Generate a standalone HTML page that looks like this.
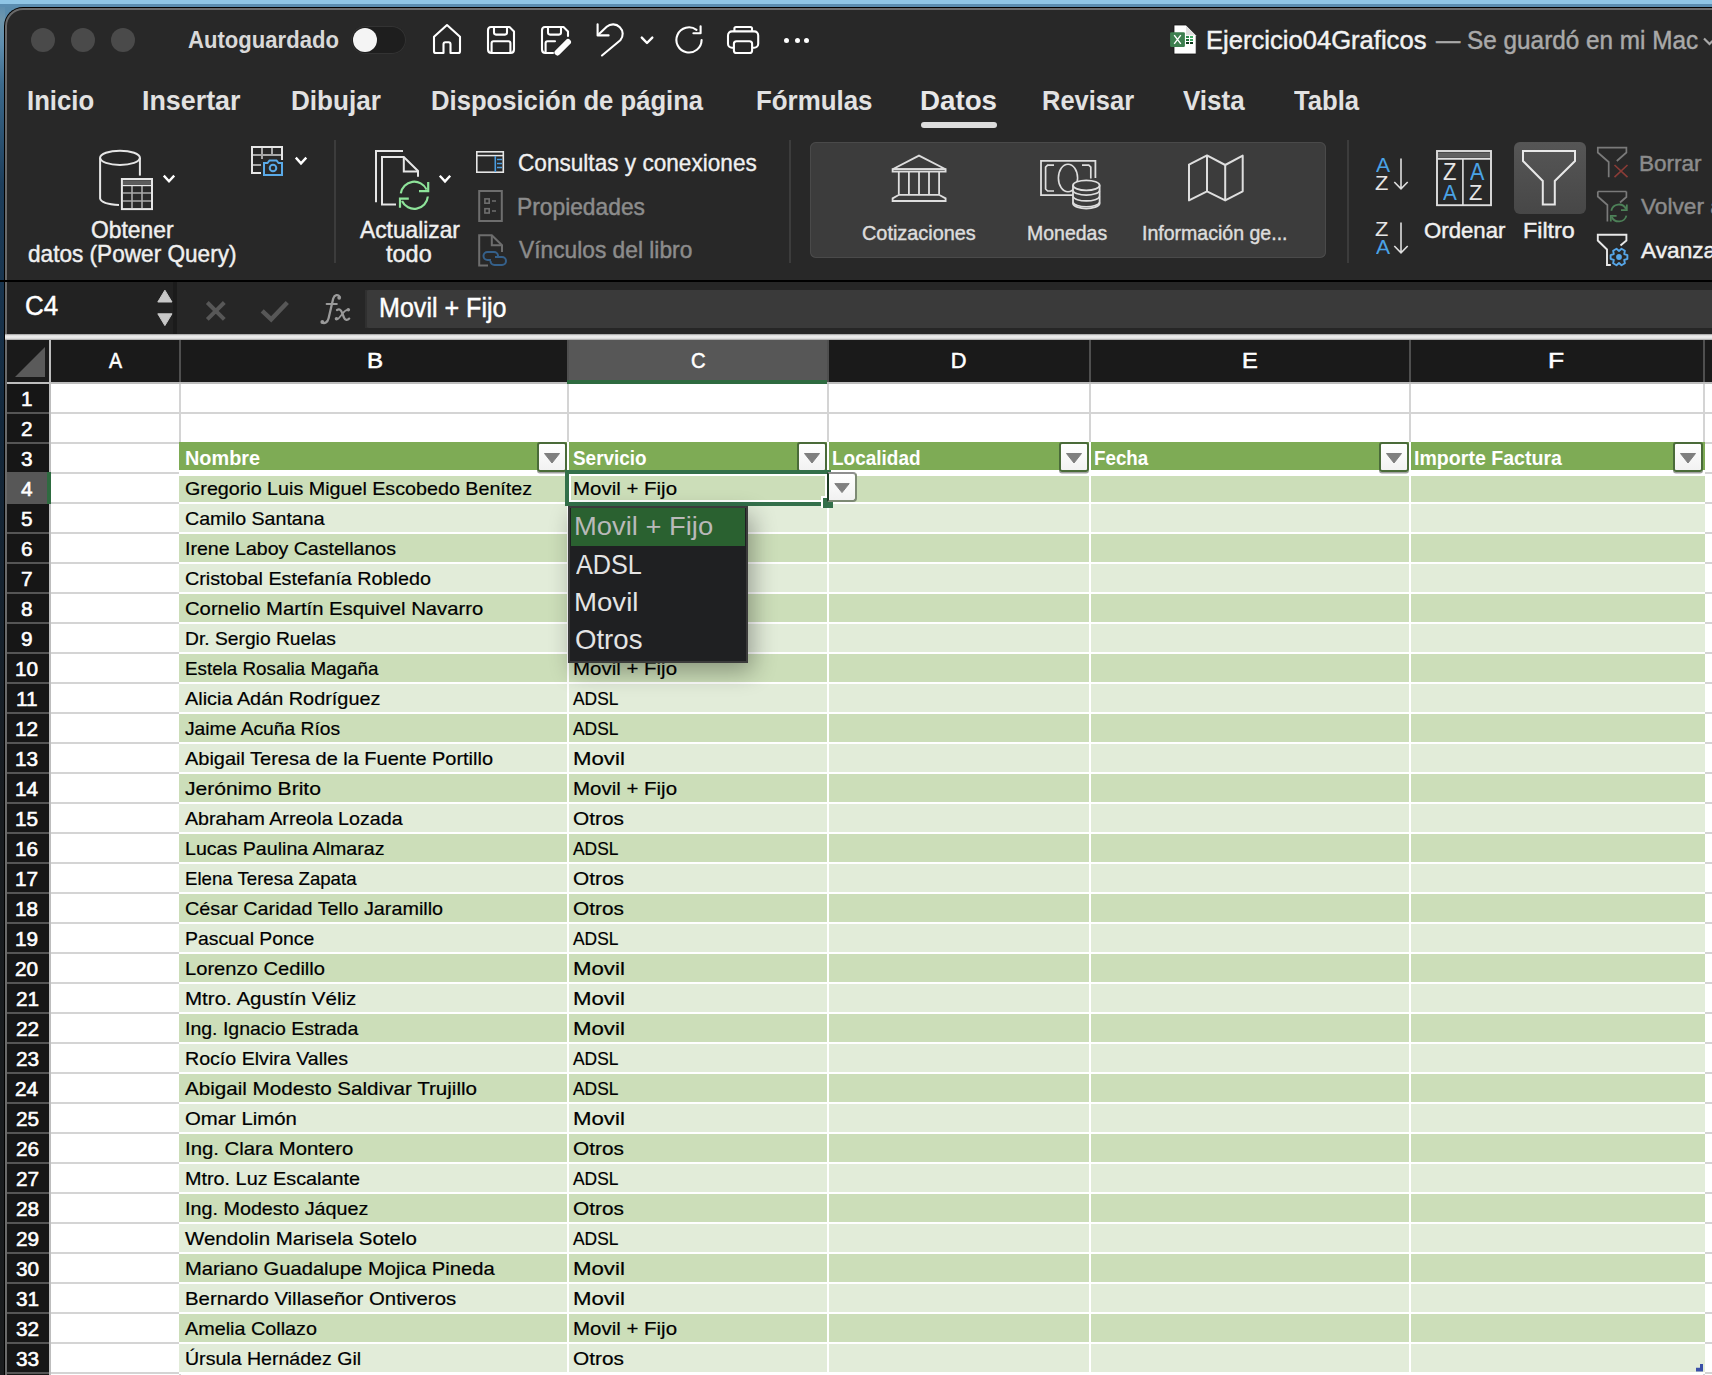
<!DOCTYPE html>
<html><head><meta charset="utf-8"><style>
html,body{margin:0;padding:0;}
body{width:1712px;height:1375px;overflow:hidden;position:relative;background:#0f2a44;font-family:"Liberation Sans", sans-serif;}
.t{position:absolute;line-height:0;white-space:nowrap;transform-origin:0 0;}
.r{position:absolute;}
svg{position:absolute;overflow:visible;}
</style></head><body>

<div class="r" style="left:0px;top:0px;width:60px;height:60px;background:#5a8cad;"></div>
<div class="r" style="left:0px;top:4px;width:5px;height:1371px;background:#0f2840;background:linear-gradient(#5b8db0 0px,#6f97ad 16px,#5f8eae 40px,#3c6a8c 80px,#1d3e5c 180px,#13283c 420px,#181c20 800px,#1a1c1e 1375px);"></div>
<div class="r" style="left:0px;top:4px;width:1712px;height:3px;background:#5b8db0;"></div>
<div class="r" style="left:0px;top:0px;width:1712px;height:4px;background:#8fc5e5;"></div>
<div class="r" style="left:4px;top:7px;width:1720px;height:1400px;background:#000;border-top-left-radius:19px;"></div>
<div class="r" style="left:5px;top:8px;width:1720px;height:1400px;background:#6a6a6a;border-top-left-radius:18px;"></div>
<div class="r" style="left:7px;top:10px;width:1720px;height:1400px;background:#282828;border-top-left-radius:16px;"></div>
<div class="r" style="left:31px;top:28px;width:24px;height:24px;background:#4a4a4a;border-radius:50%;"></div>
<div class="r" style="left:71px;top:28px;width:24px;height:24px;background:#4a4a4a;border-radius:50%;"></div>
<div class="r" style="left:111px;top:28px;width:24px;height:24px;background:#4a4a4a;border-radius:50%;"></div>
<div class="t" style="left:187.55px;top:39.94px;font-size:24.71px;color:#d9d9d9;font-weight:bold;transform:scaleX(0.8942);">Autoguardado</div>
<div class="r" style="left:351px;top:26px;width:55px;height:28px;background:#1e1e1e;border-radius:14px;box-shadow:inset 0 0 0 1px #333;"></div>
<div class="r" style="left:353px;top:28px;width:24px;height:24px;background:#f4f4f4;border-radius:50%;"></div>
<div class="t" style="left:1206.36px;top:39.79px;font-size:25.15px;color:#f2f2f2;transform:scaleX(1.0179);-webkit-text-stroke:0.45px #f2f2f2;">Ejercicio04Graficos</div>
<div class="t" style="left:1435.70px;top:39.79px;font-size:25.15px;color:#a9a9a9;transform:scaleX(0.9671);-webkit-text-stroke:0.45px #a9a9a9;">— Se guardó en mi Mac</div>
<div class="t" style="left:27.35px;top:100.53px;font-size:27.33px;color:#e2e2e2;font-weight:bold;transform:scaleX(0.9401);">Inicio</div>
<div class="t" style="left:142.28px;top:100.53px;font-size:27.33px;color:#e2e2e2;font-weight:bold;transform:scaleX(0.9821);">Insertar</div>
<div class="t" style="left:290.83px;top:100.53px;font-size:27.33px;color:#e2e2e2;font-weight:bold;transform:scaleX(0.9537);">Dibujar</div>
<div class="t" style="left:430.86px;top:100.53px;font-size:27.33px;color:#e2e2e2;font-weight:bold;transform:scaleX(0.9383);">Disposición de página</div>
<div class="t" style="left:756.34px;top:100.53px;font-size:27.33px;color:#e2e2e2;font-weight:bold;transform:scaleX(0.9470);">Fórmulas</div>
<div class="t" style="left:920.42px;top:100.53px;font-size:27.33px;color:#e8e8e8;font-weight:bold;transform:scaleX(1.0144);">Datos</div>
<div class="t" style="left:1041.87px;top:100.53px;font-size:27.33px;color:#e2e2e2;font-weight:bold;transform:scaleX(0.9326);">Revisar</div>
<div class="t" style="left:1183.26px;top:100.53px;font-size:27.33px;color:#e2e2e2;font-weight:bold;transform:scaleX(0.9498);">Vista</div>
<div class="t" style="left:1294.27px;top:100.53px;font-size:27.33px;color:#e2e2e2;font-weight:bold;transform:scaleX(0.9386);">Tabla</div>
<div class="r" style="left:921px;top:121.5px;width:76px;height:6px;background:#dcdcdc;border-radius:3px;"></div>
<svg style="left:0;top:0" width="1712" height="80"><path d="M1704 38.5 L1709.5 44 L1715 38.5" fill="none" stroke="#a9a9a9" stroke-width="2.2"/></svg>
<svg style="left:0;top:0" width="1712" height="280" fill="none" stroke="#ffffff" stroke-width="2.1" stroke-linecap="round" stroke-linejoin="round"><path d="M443.5 53 H435.8 Q434 53 434 51.2 V36.8 L447 25 L460 36.8 V51.2 Q460 53 458.2 53 H450.5 V44.2 Q450.5 42.3 448.6 42.3 H445.4 Q443.5 42.3 443.5 44.2 Z"/><path d="M491 27 H509.5 L514 31.5 V49.5 Q514 53 510.5 53 H491.5 Q488 53 488 49.5 V30.5 Q488 27 491 27 Z"/><path d="M494 27.2 V32.6 Q494 34.6 496 34.6 H505 Q507 34.6 507 32.6 V27.2"/><path d="M491.6 52.8 V43.2 Q491.6 41.3 493.5 41.3 H508.5 Q510.4 41.3 510.4 43.2 V52.8"/><path d="M553 53 H545.5 Q542 53 542 49.5 V30.5 Q542 27 545 27 H563.5 L568 31.5 V36"/><path d="M548 27.2 V32.6 Q548 34.6 550 34.6 H559 Q561 34.6 561 32.6 V27.2"/><path d="M545.6 52.8 V43.2 Q545.6 41.3 547.5 41.3 H555"/><path d="M557.5 52.5 L568 42" stroke-width="6"/><path d="M597.6 24.3 V35.4 H608.6"/><path d="M598 35 L606.7 26.8 A9.6 9.6 0 0 1 620.3 40.3 L602 55.5"/><path d="M641.8 37.6 L647 43 L652.3 37.6" stroke-width="2.4"/><path d="M701.6 40 A12.6 12.6 0 1 1 696.5 29.8"/><path d="M700.6 26.3 V33.3 H693.4"/><rect x="728" y="31.4" width="30.2" height="16.4" rx="4"/><path d="M734.4 31 V28.6 Q734.4 27 736 27 H750.4 Q752 27 752 28.6 V31"/><rect x="733.9" y="41.2" width="18.2" height="11.8" rx="2.6" fill="#282828"/></svg>
<div class="r" style="left:784.4px;top:37.5px;width:5px;height:5px;background:#ffffff;border-radius:50%;"></div>
<div class="r" style="left:794.5px;top:37.5px;width:5px;height:5px;background:#ffffff;border-radius:50%;"></div>
<div class="r" style="left:804.4px;top:37.5px;width:5px;height:5px;background:#ffffff;border-radius:50%;"></div>
<svg style="left:0;top:0" width="1712" height="80"><path d="M1174 25 H1186 L1196.2 35.2 V54 H1174 Z" fill="#ffffff" stroke="#111" stroke-width="0.8"/><path d="M1186 25.5 V35.2 H1195.8 Z" fill="#e0e0e0"/><rect x="1170.1" y="32.2" width="14.8" height="14.7" rx="1.2" fill="#3d7f4f"/><path d="M1174.2 35.2 L1180.8 43.9 M1180.8 35.2 L1174.2 43.9" stroke="#fff" stroke-width="1.4"/><rect x="1186" y="36" width="3" height="2" fill="#2f8a4f"/><rect x="1190" y="36" width="3" height="2" fill="#44b06a"/><rect x="1186" y="39" width="3" height="2" fill="#1f6f38"/><rect x="1190" y="39" width="3" height="2" fill="#3ea563"/><rect x="1186" y="42" width="3" height="2" fill="#0f3d1e"/><rect x="1190" y="42" width="3" height="2" fill="#0c3519"/></svg>
<div class="r" style="left:333.5px;top:140px;width:2px;height:123px;background:#3c3c3c;"></div>
<div class="r" style="left:789px;top:140px;width:2px;height:123px;background:#3c3c3c;"></div>
<div class="r" style="left:1347px;top:140px;width:2px;height:123px;background:#3c3c3c;"></div>
<div class="r" style="left:810px;top:142px;width:516px;height:116px;background:#3c3c3c;border-radius:6px;box-shadow:inset 0 0 0 1px #4a4a4a;"></div>
<div class="r" style="left:1514px;top:142px;width:72px;height:72px;background:#4b4b4b;border-radius:6px;background:linear-gradient(#565656,#474747);"></div>
<svg style="left:0;top:0" width="1712" height="280" fill="none" stroke="#e6e6e6" stroke-width="2" stroke-linecap="butt" stroke-linejoin="miter"><ellipse cx="120" cy="157.8" rx="19.9" ry="7.1"/><path d="M100.1 157.8 V198.4 Q101.5 204 119 205"/><path d="M139.9 157.8 V175.6"/><rect x="121.9" y="179" width="30.1" height="30.1" fill="#282828"/><rect x="123" y="180.3" width="28" height="4" fill="#5c5c5c" stroke="none"/><path d="M132 185 V208 M142 185 V208 M123 193 H151 M123 201 H151" stroke="#a8a8a8" stroke-width="1.6"/><path d="M122 185.5 H152" stroke="#e6e6e6" stroke-width="1.4"/><path d="M163.8 175.6 L169 181.2 L174.2 175.6" stroke="#fff" stroke-width="2.4"/><path d="M295.8 157.6 L301 163.4 L306.3 157.6" stroke="#fff" stroke-width="2.4"/><path d="M439.8 175.8 L445 181.4 L450.2 175.8" stroke="#fff" stroke-width="2.4"/><path d="M261 173 H252 V147 H282 V160"/><path d="M262 148 V159 M272 148 V156 M253 155 H281 M253 165 H261" stroke="#a8a8a8" stroke-width="2"/><path d="M264 175 V163 H267.5 L269.5 160.5 H276.5 L278.5 163 H282 V175 Z" stroke="#5aaae8" fill="#282828"/><circle cx="273" cy="168" r="3.3" stroke="#5aaae8"/><path d="M376 202.2 V151 H403"/><path d="M396 204.5 H382 V157 H403.8 L418 171 V176.8"/><path d="M403.8 157 V171.5 H418"/><path d="M400.8 193.4 A13.6 13.6 0 0 1 426.6 189.6" stroke="#8ee39a" stroke-width="2.2"/><path d="M428.2 182 V191.2 H419" stroke="#8ee39a" stroke-width="2.2"/><path d="M427.85 196.5 A13.6 13.6 0 0 1 402 201.05" stroke="#8ee39a" stroke-width="2.2"/><path d="M400 207.8 V198.7 H408.8" stroke="#8ee39a" stroke-width="2.2"/><rect x="476.8" y="151.8" width="26.5" height="20.4" stroke-width="1.6"/><path d="M477 155.6 H503" stroke-width="1.5"/><path d="M495.3 156 V172" stroke="#4a9de0" stroke-width="1.6"/><path d="M497 159.4 H502 M497 163.5 H502 M497 167.5 H502" stroke="#4a9de0" stroke-width="1.5"/><rect x="479.2" y="191" width="22.6" height="30" stroke="#6e6e6e" stroke-width="2"/><rect x="484.9" y="198.9" width="4.3" height="4.3" stroke="#6e6e6e" stroke-width="1.6"/><rect x="484.9" y="208.7" width="4.3" height="4.3" stroke="#6e6e6e" stroke-width="1.6"/><path d="M492 201 H496 M492 211 H496" stroke="#6e6e6e" stroke-width="1.6"/><path d="M488 265.5 H479.2 V235.2 H491.8 L502 245.2 V252" stroke="#6e6e6e" stroke-width="2"/><path d="M491.8 235.5 V245.2 H502" stroke="#6e6e6e" stroke-width="2"/><path d="M491 260 H487.5 A4 4 0 0 1 487.5 252 H494 A4 4 0 0 1 498 256" stroke="#35608a" stroke-width="2"/><path d="M495 257 H502 A4 4 0 0 1 502 265 H494.5 A4 4 0 0 1 490.5 261" stroke="#35608a" stroke-width="2"/></svg>
<svg style="left:0;top:0" width="1712" height="280" fill="none" stroke="#dedede" stroke-width="1.8"><path d="M892.6 169.2 L919 155.6 L945.6 169.2 Z"/><rect x="892.6" y="169.2" width="53" height="2.4"/><path d="M898.8 172 V194.6 M908.9 172 V194.6 M919 172 V194.6 M929 172 V194.6 M939.1 172 V194.6"/><path d="M899 194.8 H939 L945.6 198.4 V201 H892.6 V198.4 Z"/><path d="M1075 195.2 H1041 V160.8 H1095.4 V178"/><path d="M1054 165.2 H1047.6 L1045.6 167.2 V189 L1047.6 191 H1054 M1082 165.2 H1088.8 L1090.8 167.2 V178.6" stroke-width="1.7"/><ellipse cx="1068" cy="178" rx="9.6" ry="13.8" stroke-width="1.6"/><path d="M1073 185.3 V203.8 A13.4 5.4 0 0 0 1099.6 203.8 V185.3" fill="#3c3c3c"/><ellipse cx="1086.3" cy="185.3" rx="13.3" ry="5" fill="#3c3c3c"/><path d="M1073 190.7 A13.4 5 0 0 0 1099.6 190.7 M1073 196.5 A13.4 5 0 0 0 1099.6 196.5 M1073 202.3 A13.4 5 0 0 0 1099.6 202.3" stroke-width="1.6"/><path d="M1189 164.6 L1207 155.4 L1225.2 165 L1242.7 155.6 V191.3 L1225.2 200.4 L1207 191.3 L1189 200.4 Z M1207 155.4 V191.3 M1225.2 165 V200.4" stroke-width="2" stroke-linejoin="round"/></svg>
<svg style="left:0;top:0" width="1712" height="280" fill="none" stroke="#dedede" stroke-width="1.6"><path d="M1401 158.5 V188.5 M1394.3 182 L1401 188.8 L1407.7 182"/><path d="M1401 222.5 V252.5 M1394.3 246 L1401 252.8 L1407.7 246"/><rect x="1437" y="151" width="54" height="54.2" stroke-width="1.9"/><rect x="1438" y="152.4" width="52" height="5.4" fill="#616161" stroke="none"/><path d="M1437.5 158.9 H1490.5 M1462.9 159 V205"/></svg>
<div class="t" style="left:1376.00px;top:164.80px;font-size:19.62px;color:#4aa3e6;transform:scaleX(1.0769);">A</div>
<div class="t" style="left:1375.46px;top:182.95px;font-size:20.35px;color:#e6e6e6;transform:scaleX(1.0756);">Z</div>
<div class="t" style="left:1375.46px;top:229.15px;font-size:20.35px;color:#e6e6e6;transform:scaleX(1.0756);">Z</div>
<div class="t" style="left:1376.00px;top:247.05px;font-size:20.35px;color:#4aa3e6;transform:scaleX(1.0370);">A</div>
<div class="t" style="left:1443.31px;top:171.99px;font-size:23.98px;color:#e6e6e6;transform:scaleX(0.9208);">Z</div>
<div class="t" style="left:1442.60px;top:192.09px;font-size:22.82px;color:#4aa3e6;transform:scaleX(0.9049);">A</div>
<div class="t" style="left:1469.70px;top:171.99px;font-size:23.98px;color:#4aa3e6;transform:scaleX(0.9000);">A</div>
<div class="t" style="left:1469.28px;top:192.09px;font-size:22.82px;color:#e6e6e6;transform:scaleX(0.9600);">Z</div>
<svg style="left:0;top:0" width="1712" height="280" fill="none" stroke="#e8e8e8" stroke-width="2"><path d="M1523 151 H1575 V161 L1554.8 181 V204.6 H1542.8 V181 L1523 161 Z"/><path d="M1616.8 161 L1626.4 152.5 V147.6 H1597.8 V152.5 L1608.7 162 V177.2" stroke="#7a7a7a" stroke-width="1.7"/><path d="M1614.5 165 L1627.5 177.2 M1627.5 165 L1614.5 177.2" stroke="#8a3c37" stroke-width="1.6"/><path d="M1597.8 191.5 V196.5 L1607.4 205 V221.5 M1626.4 191.5 V197 L1620 202.5 M1597.8 191.5 H1626.4" stroke="#7a7a7a" stroke-width="1.7"/><path d="M1611.3 210.8 A7.8 7.8 0 0 1 1626 209" stroke="#4d8158" stroke-width="1.8"/><path d="M1626.8 204.5 V210.2 H1621" stroke="#4d8158" stroke-width="1.8"/><path d="M1626.4 215.6 A7.8 7.8 0 0 1 1611.8 217" stroke="#4d8158" stroke-width="1.8"/><path d="M1610.8 221.6 V215.8 H1616.6" stroke="#4d8158" stroke-width="1.8"/><path d="M1610.8 265 H1607 V249.5 L1597.8 240.5 V234.8 H1626.4 V240.5 L1620.5 245.5" stroke="#e8e8e8" stroke-width="1.9"/></svg>
<svg style="left:0;top:0" width="1712" height="280"><polygon points="1627.38,255.07 1627.38,258.93 1624.20,260.00 1624.87,263.29 1621.51,265.22 1619.00,263.00 1616.49,265.22 1613.13,263.29 1613.80,260.00 1610.62,258.93 1610.62,255.07 1613.80,254.00 1613.13,250.71 1616.49,248.78 1619.00,251.00 1621.51,248.78 1624.87,250.71 1624.20,254.00" fill="none" stroke="#56a6e8" stroke-width="1.9" stroke-linejoin="round"/><circle cx="1619" cy="257" r="2.9" fill="#56a6e8"/></svg>
<div class="t" style="left:91.04px;top:230.14px;font-size:23.84px;color:#f0f0f0;transform:scaleX(0.9586);-webkit-text-stroke:0.45px #f0f0f0;">Obtener</div>
<div class="t" style="left:28.05px;top:253.94px;font-size:23.84px;color:#f0f0f0;transform:scaleX(0.9486);-webkit-text-stroke:0.45px #f0f0f0;">datos (Power Query)</div>
<div class="t" style="left:359.80px;top:230.14px;font-size:23.84px;color:#f0f0f0;transform:scaleX(0.9552);-webkit-text-stroke:0.45px #f0f0f0;">Actualizar</div>
<div class="t" style="left:386.15px;top:253.94px;font-size:23.84px;color:#f0f0f0;transform:scaleX(0.9867);-webkit-text-stroke:0.45px #f0f0f0;">todo</div>
<div class="t" style="left:517.51px;top:162.84px;font-size:23.84px;color:#f0f0f0;transform:scaleX(0.9487);-webkit-text-stroke:0.35px #f0f0f0;">Consultas y conexiones</div>
<div class="t" style="left:516.79px;top:206.74px;font-size:23.84px;color:#8c8c8c;transform:scaleX(0.9563);-webkit-text-stroke:0.45px #8c8c8c;">Propiedades</div>
<div class="t" style="left:518.70px;top:250.24px;font-size:23.84px;color:#8c8c8c;transform:scaleX(0.9550);-webkit-text-stroke:0.45px #8c8c8c;">Vínculos del libro</div>
<div class="t" style="left:861.72px;top:233.45px;font-size:20.35px;color:#dcdcdc;transform:scaleX(0.9768);-webkit-text-stroke:0.45px #dcdcdc;">Cotizaciones</div>
<div class="t" style="left:1027.36px;top:233.45px;font-size:20.35px;color:#dcdcdc;transform:scaleX(0.9575);-webkit-text-stroke:0.45px #dcdcdc;">Monedas</div>
<div class="t" style="left:1141.92px;top:233.45px;font-size:20.35px;color:#dcdcdc;transform:scaleX(0.9603);-webkit-text-stroke:0.45px #dcdcdc;">Información ge...</div>
<div class="t" style="left:1423.83px;top:230.04px;font-size:22.97px;color:#f0f0f0;transform:scaleX(0.9663);-webkit-text-stroke:0.45px #f0f0f0;">Ordenar</div>
<div class="t" style="left:1523.22px;top:229.64px;font-size:22.97px;color:#f0f0f0;transform:scaleX(1.0144);-webkit-text-stroke:0.45px #f0f0f0;">Filtro</div>
<div class="t" style="left:1639.26px;top:162.64px;font-size:22.67px;color:#8c8c8c;transform:scaleX(0.9943);-webkit-text-stroke:0.45px #8c8c8c;">Borrar</div>
<div class="t" style="left:1641.00px;top:206.14px;font-size:22.67px;color:#8c8c8c;-webkit-text-stroke:0.45px #8c8c8c;">Volver a</div>
<div class="t" style="left:1641.00px;top:250.14px;font-size:22.67px;color:#f0f0f0;-webkit-text-stroke:0.45px #f0f0f0;">Avanzadas</div>
<div class="r" style="left:0px;top:280px;width:1712px;height:2px;background:#000;"></div>
<div class="r" style="left:7px;top:282px;width:1710px;height:52px;background:#262626;"></div>
<div class="r" style="left:7px;top:282px;width:166px;height:52px;background:#222222;"></div>
<div class="r" style="left:173px;top:282px;width:4px;height:52px;background:#1b1b1b;"></div>
<div class="r" style="left:365px;top:290px;width:1350px;height:38px;background:#3a3a3a;border-radius:4px 0 0 4px;"></div>
<div class="r" style="left:365px;top:290px;width:2px;height:38px;background:#303030;"></div>
<div class="t" style="left:24.83px;top:306.43px;font-size:27.62px;color:#ffffff;transform:scaleX(0.9394);-webkit-text-stroke:0.45px #ffffff;">C4</div>
<div class="t" style="left:378.96px;top:308.43px;font-size:27.62px;color:#ffffff;transform:scaleX(0.9084);-webkit-text-stroke:0.45px #ffffff;">Movil + Fijo</div>
<div class="r" style="left:5px;top:334px;width:1712px;height:6px;background:#e6e6e6;background:linear-gradient(#9a9a9a,#ececec 30%,#e8e8e8 70%,#a0a0a0);"></div>
<div class="r" style="left:7px;top:340px;width:1710px;height:42px;background:#1a1a1a;"></div>
<div class="r" style="left:567px;top:340px;width:260px;height:40px;background:#575757;"></div>
<div class="r" style="left:179px;top:340px;width:2px;height:42px;background:#4f4f4f;"></div>
<div class="r" style="left:567px;top:340px;width:2px;height:42px;background:#4f4f4f;"></div>
<div class="r" style="left:827px;top:340px;width:2px;height:42px;background:#4f4f4f;"></div>
<div class="r" style="left:1089px;top:340px;width:2px;height:42px;background:#4f4f4f;"></div>
<div class="r" style="left:1409px;top:340px;width:2px;height:42px;background:#4f4f4f;"></div>
<div class="r" style="left:1703px;top:340px;width:2px;height:42px;background:#4f4f4f;"></div>
<div class="r" style="left:49px;top:340px;width:2px;height:1040px;background:#bdbdbd;"></div>
<div class="r" style="left:7px;top:382px;width:1710px;height:2px;background:#bdbdbd;"></div>
<div class="r" style="left:567px;top:380px;width:260px;height:4px;background:#2e6b40;"></div>
<svg style="left:0;top:0" width="1712" height="1375"><polygon points="15,377 45,347 45,377" fill="#5a5a5a"/></svg>
<div class="t" style="left:108.50px;top:360.75px;font-size:21.80px;color:#ffffff;transform:scaleX(0.8966);-webkit-text-stroke:0.55px #ffffff;">A</div>
<div class="t" style="left:366.56px;top:360.75px;font-size:21.80px;color:#ffffff;transform:scaleX(1.1064);-webkit-text-stroke:0.55px #ffffff;">B</div>
<div class="t" style="left:690.57px;top:360.75px;font-size:21.80px;color:#ffffff;transform:scaleX(0.9286);-webkit-text-stroke:0.55px #ffffff;">C</div>
<div class="t" style="left:950.75px;top:360.75px;font-size:21.80px;color:#ffffff;-webkit-text-stroke:0.55px #ffffff;">D</div>
<div class="t" style="left:1241.60px;top:360.75px;font-size:21.80px;color:#ffffff;transform:scaleX(1.0833);-webkit-text-stroke:0.55px #ffffff;">E</div>
<div class="t" style="left:1548.38px;top:360.75px;font-size:21.80px;color:#ffffff;transform:scaleX(1.2093);-webkit-text-stroke:0.55px #ffffff;">F</div>
<div class="r" style="left:51px;top:384px;width:1670px;height:1000px;background:#ffffff;"></div>
<div class="r" style="left:51px;top:412px;width:1670px;height:2px;background:#d4d4d4;"></div>
<div class="r" style="left:51px;top:442px;width:1670px;height:2px;background:#d4d4d4;"></div>
<div class="r" style="left:51px;top:472px;width:1670px;height:2px;background:#d4d4d4;"></div>
<div class="r" style="left:51px;top:502px;width:1670px;height:2px;background:#d4d4d4;"></div>
<div class="r" style="left:51px;top:532px;width:1670px;height:2px;background:#d4d4d4;"></div>
<div class="r" style="left:51px;top:562px;width:1670px;height:2px;background:#d4d4d4;"></div>
<div class="r" style="left:51px;top:592px;width:1670px;height:2px;background:#d4d4d4;"></div>
<div class="r" style="left:51px;top:622px;width:1670px;height:2px;background:#d4d4d4;"></div>
<div class="r" style="left:51px;top:652px;width:1670px;height:2px;background:#d4d4d4;"></div>
<div class="r" style="left:51px;top:682px;width:1670px;height:2px;background:#d4d4d4;"></div>
<div class="r" style="left:51px;top:712px;width:1670px;height:2px;background:#d4d4d4;"></div>
<div class="r" style="left:51px;top:742px;width:1670px;height:2px;background:#d4d4d4;"></div>
<div class="r" style="left:51px;top:772px;width:1670px;height:2px;background:#d4d4d4;"></div>
<div class="r" style="left:51px;top:802px;width:1670px;height:2px;background:#d4d4d4;"></div>
<div class="r" style="left:51px;top:832px;width:1670px;height:2px;background:#d4d4d4;"></div>
<div class="r" style="left:51px;top:862px;width:1670px;height:2px;background:#d4d4d4;"></div>
<div class="r" style="left:51px;top:892px;width:1670px;height:2px;background:#d4d4d4;"></div>
<div class="r" style="left:51px;top:922px;width:1670px;height:2px;background:#d4d4d4;"></div>
<div class="r" style="left:51px;top:952px;width:1670px;height:2px;background:#d4d4d4;"></div>
<div class="r" style="left:51px;top:982px;width:1670px;height:2px;background:#d4d4d4;"></div>
<div class="r" style="left:51px;top:1012px;width:1670px;height:2px;background:#d4d4d4;"></div>
<div class="r" style="left:51px;top:1042px;width:1670px;height:2px;background:#d4d4d4;"></div>
<div class="r" style="left:51px;top:1072px;width:1670px;height:2px;background:#d4d4d4;"></div>
<div class="r" style="left:51px;top:1102px;width:1670px;height:2px;background:#d4d4d4;"></div>
<div class="r" style="left:51px;top:1132px;width:1670px;height:2px;background:#d4d4d4;"></div>
<div class="r" style="left:51px;top:1162px;width:1670px;height:2px;background:#d4d4d4;"></div>
<div class="r" style="left:51px;top:1192px;width:1670px;height:2px;background:#d4d4d4;"></div>
<div class="r" style="left:51px;top:1222px;width:1670px;height:2px;background:#d4d4d4;"></div>
<div class="r" style="left:51px;top:1252px;width:1670px;height:2px;background:#d4d4d4;"></div>
<div class="r" style="left:51px;top:1282px;width:1670px;height:2px;background:#d4d4d4;"></div>
<div class="r" style="left:51px;top:1312px;width:1670px;height:2px;background:#d4d4d4;"></div>
<div class="r" style="left:51px;top:1342px;width:1670px;height:2px;background:#d4d4d4;"></div>
<div class="r" style="left:51px;top:1372px;width:1670px;height:2px;background:#d4d4d4;"></div>
<div class="r" style="left:179px;top:384px;width:2px;height:1000px;background:#d4d4d4;"></div>
<div class="r" style="left:567px;top:384px;width:2px;height:1000px;background:#d4d4d4;"></div>
<div class="r" style="left:827px;top:384px;width:2px;height:1000px;background:#d4d4d4;"></div>
<div class="r" style="left:1089px;top:384px;width:2px;height:1000px;background:#d4d4d4;"></div>
<div class="r" style="left:1409px;top:384px;width:2px;height:1000px;background:#d4d4d4;"></div>
<div class="r" style="left:1703px;top:384px;width:2px;height:1000px;background:#d4d4d4;"></div>
<div class="r" style="left:7px;top:384px;width:42px;height:1000px;background:#161616;"></div>
<div class="r" style="left:7px;top:412px;width:42px;height:2px;background:#555555;"></div>
<div class="r" style="left:7px;top:442px;width:42px;height:2px;background:#555555;"></div>
<div class="r" style="left:7px;top:472px;width:42px;height:2px;background:#555555;"></div>
<div class="r" style="left:7px;top:502px;width:42px;height:2px;background:#555555;"></div>
<div class="r" style="left:7px;top:532px;width:42px;height:2px;background:#555555;"></div>
<div class="r" style="left:7px;top:562px;width:42px;height:2px;background:#555555;"></div>
<div class="r" style="left:7px;top:592px;width:42px;height:2px;background:#555555;"></div>
<div class="r" style="left:7px;top:622px;width:42px;height:2px;background:#555555;"></div>
<div class="r" style="left:7px;top:652px;width:42px;height:2px;background:#555555;"></div>
<div class="r" style="left:7px;top:682px;width:42px;height:2px;background:#555555;"></div>
<div class="r" style="left:7px;top:712px;width:42px;height:2px;background:#555555;"></div>
<div class="r" style="left:7px;top:742px;width:42px;height:2px;background:#555555;"></div>
<div class="r" style="left:7px;top:772px;width:42px;height:2px;background:#555555;"></div>
<div class="r" style="left:7px;top:802px;width:42px;height:2px;background:#555555;"></div>
<div class="r" style="left:7px;top:832px;width:42px;height:2px;background:#555555;"></div>
<div class="r" style="left:7px;top:862px;width:42px;height:2px;background:#555555;"></div>
<div class="r" style="left:7px;top:892px;width:42px;height:2px;background:#555555;"></div>
<div class="r" style="left:7px;top:922px;width:42px;height:2px;background:#555555;"></div>
<div class="r" style="left:7px;top:952px;width:42px;height:2px;background:#555555;"></div>
<div class="r" style="left:7px;top:982px;width:42px;height:2px;background:#555555;"></div>
<div class="r" style="left:7px;top:1012px;width:42px;height:2px;background:#555555;"></div>
<div class="r" style="left:7px;top:1042px;width:42px;height:2px;background:#555555;"></div>
<div class="r" style="left:7px;top:1072px;width:42px;height:2px;background:#555555;"></div>
<div class="r" style="left:7px;top:1102px;width:42px;height:2px;background:#555555;"></div>
<div class="r" style="left:7px;top:1132px;width:42px;height:2px;background:#555555;"></div>
<div class="r" style="left:7px;top:1162px;width:42px;height:2px;background:#555555;"></div>
<div class="r" style="left:7px;top:1192px;width:42px;height:2px;background:#555555;"></div>
<div class="r" style="left:7px;top:1222px;width:42px;height:2px;background:#555555;"></div>
<div class="r" style="left:7px;top:1252px;width:42px;height:2px;background:#555555;"></div>
<div class="r" style="left:7px;top:1282px;width:42px;height:2px;background:#555555;"></div>
<div class="r" style="left:7px;top:1312px;width:42px;height:2px;background:#555555;"></div>
<div class="r" style="left:7px;top:1342px;width:42px;height:2px;background:#555555;"></div>
<div class="r" style="left:7px;top:1372px;width:42px;height:2px;background:#555555;"></div>
<div class="r" style="left:7px;top:472px;width:42px;height:32px;background:#575757;"></div>
<div class="r" style="left:47px;top:472px;width:4px;height:32px;background:#2e6b40;"></div>
<div class="t" style="left:21.09px;top:398.87px;font-size:20.00px;color:#ffffff;transform:scaleX(1.0400);-webkit-text-stroke:0.55px #ffffff;">1</div>
<div class="t" style="left:21.35px;top:428.87px;font-size:20.00px;color:#ffffff;transform:scaleX(1.0400);-webkit-text-stroke:0.55px #ffffff;">2</div>
<div class="t" style="left:21.48px;top:458.87px;font-size:20.00px;color:#ffffff;transform:scaleX(1.0400);-webkit-text-stroke:0.55px #ffffff;">3</div>
<div class="t" style="left:21.48px;top:488.87px;font-size:20.00px;color:#ffffff;transform:scaleX(1.0400);-webkit-text-stroke:0.55px #ffffff;">4</div>
<div class="t" style="left:21.48px;top:518.87px;font-size:20.00px;color:#ffffff;transform:scaleX(1.0400);-webkit-text-stroke:0.55px #ffffff;">5</div>
<div class="t" style="left:21.35px;top:548.87px;font-size:20.00px;color:#ffffff;transform:scaleX(1.0400);-webkit-text-stroke:0.55px #ffffff;">6</div>
<div class="t" style="left:21.35px;top:578.87px;font-size:20.00px;color:#ffffff;transform:scaleX(1.0400);-webkit-text-stroke:0.55px #ffffff;">7</div>
<div class="t" style="left:21.48px;top:608.87px;font-size:20.00px;color:#ffffff;transform:scaleX(1.0400);-webkit-text-stroke:0.55px #ffffff;">8</div>
<div class="t" style="left:21.48px;top:638.87px;font-size:20.00px;color:#ffffff;transform:scaleX(1.0400);-webkit-text-stroke:0.55px #ffffff;">9</div>
<div class="t" style="left:15.11px;top:668.87px;font-size:20.00px;color:#ffffff;transform:scaleX(1.0400);-webkit-text-stroke:0.55px #ffffff;">10</div>
<div class="t" style="left:16.02px;top:698.87px;font-size:20.00px;color:#ffffff;transform:scaleX(1.0400);-webkit-text-stroke:0.55px #ffffff;">11</div>
<div class="t" style="left:15.24px;top:728.87px;font-size:20.00px;color:#ffffff;transform:scaleX(1.0400);-webkit-text-stroke:0.55px #ffffff;">12</div>
<div class="t" style="left:15.24px;top:758.87px;font-size:20.00px;color:#ffffff;transform:scaleX(1.0400);-webkit-text-stroke:0.55px #ffffff;">13</div>
<div class="t" style="left:15.11px;top:788.87px;font-size:20.00px;color:#ffffff;transform:scaleX(1.0400);-webkit-text-stroke:0.55px #ffffff;">14</div>
<div class="t" style="left:15.24px;top:818.87px;font-size:20.00px;color:#ffffff;transform:scaleX(1.0400);-webkit-text-stroke:0.55px #ffffff;">15</div>
<div class="t" style="left:15.24px;top:848.87px;font-size:20.00px;color:#ffffff;transform:scaleX(1.0400);-webkit-text-stroke:0.55px #ffffff;">16</div>
<div class="t" style="left:15.24px;top:878.87px;font-size:20.00px;color:#ffffff;transform:scaleX(1.0400);-webkit-text-stroke:0.55px #ffffff;">17</div>
<div class="t" style="left:15.24px;top:908.87px;font-size:20.00px;color:#ffffff;transform:scaleX(1.0400);-webkit-text-stroke:0.55px #ffffff;">18</div>
<div class="t" style="left:15.24px;top:938.87px;font-size:20.00px;color:#ffffff;transform:scaleX(1.0400);-webkit-text-stroke:0.55px #ffffff;">19</div>
<div class="t" style="left:15.37px;top:968.87px;font-size:20.00px;color:#ffffff;transform:scaleX(1.0400);-webkit-text-stroke:0.55px #ffffff;">20</div>
<div class="t" style="left:15.50px;top:998.87px;font-size:20.00px;color:#ffffff;transform:scaleX(1.0400);-webkit-text-stroke:0.55px #ffffff;">21</div>
<div class="t" style="left:15.50px;top:1028.87px;font-size:20.00px;color:#ffffff;transform:scaleX(1.0400);-webkit-text-stroke:0.55px #ffffff;">22</div>
<div class="t" style="left:15.50px;top:1058.87px;font-size:20.00px;color:#ffffff;transform:scaleX(1.0400);-webkit-text-stroke:0.55px #ffffff;">23</div>
<div class="t" style="left:15.37px;top:1088.87px;font-size:20.00px;color:#ffffff;transform:scaleX(1.0400);-webkit-text-stroke:0.55px #ffffff;">24</div>
<div class="t" style="left:15.50px;top:1118.87px;font-size:20.00px;color:#ffffff;transform:scaleX(1.0400);-webkit-text-stroke:0.55px #ffffff;">25</div>
<div class="t" style="left:15.50px;top:1148.87px;font-size:20.00px;color:#ffffff;transform:scaleX(1.0400);-webkit-text-stroke:0.55px #ffffff;">26</div>
<div class="t" style="left:15.50px;top:1178.87px;font-size:20.00px;color:#ffffff;transform:scaleX(1.0400);-webkit-text-stroke:0.55px #ffffff;">27</div>
<div class="t" style="left:15.50px;top:1208.87px;font-size:20.00px;color:#ffffff;transform:scaleX(1.0400);-webkit-text-stroke:0.55px #ffffff;">28</div>
<div class="t" style="left:15.50px;top:1238.87px;font-size:20.00px;color:#ffffff;transform:scaleX(1.0400);-webkit-text-stroke:0.55px #ffffff;">29</div>
<div class="t" style="left:15.50px;top:1268.87px;font-size:20.00px;color:#ffffff;transform:scaleX(1.0400);-webkit-text-stroke:0.55px #ffffff;">30</div>
<div class="t" style="left:15.63px;top:1298.87px;font-size:20.00px;color:#ffffff;transform:scaleX(1.0400);-webkit-text-stroke:0.55px #ffffff;">31</div>
<div class="t" style="left:15.63px;top:1328.87px;font-size:20.00px;color:#ffffff;transform:scaleX(1.0400);-webkit-text-stroke:0.55px #ffffff;">32</div>
<div class="t" style="left:15.63px;top:1358.87px;font-size:20.00px;color:#ffffff;transform:scaleX(1.0400);-webkit-text-stroke:0.55px #ffffff;">33</div>
<div class="r" style="left:179px;top:442px;width:1526px;height:28px;background:#7eab55;"></div>
<div class="r" style="left:179px;top:470px;width:1526px;height:6px;background:#ffffff;"></div>
<div class="r" style="left:179px;top:476px;width:1526px;height:26px;background:#ccdeb9;"></div>
<div class="r" style="left:179px;top:502px;width:1526px;height:2px;background:#ffffff;"></div>
<div class="r" style="left:179px;top:504px;width:1526px;height:28px;background:#e2ecd9;"></div>
<div class="r" style="left:179px;top:532px;width:1526px;height:2px;background:#ffffff;"></div>
<div class="r" style="left:179px;top:534px;width:1526px;height:28px;background:#ccdeb9;"></div>
<div class="r" style="left:179px;top:562px;width:1526px;height:2px;background:#ffffff;"></div>
<div class="r" style="left:179px;top:564px;width:1526px;height:28px;background:#e2ecd9;"></div>
<div class="r" style="left:179px;top:592px;width:1526px;height:2px;background:#ffffff;"></div>
<div class="r" style="left:179px;top:594px;width:1526px;height:28px;background:#ccdeb9;"></div>
<div class="r" style="left:179px;top:622px;width:1526px;height:2px;background:#ffffff;"></div>
<div class="r" style="left:179px;top:624px;width:1526px;height:28px;background:#e2ecd9;"></div>
<div class="r" style="left:179px;top:652px;width:1526px;height:2px;background:#ffffff;"></div>
<div class="r" style="left:179px;top:654px;width:1526px;height:28px;background:#ccdeb9;"></div>
<div class="r" style="left:179px;top:682px;width:1526px;height:2px;background:#ffffff;"></div>
<div class="r" style="left:179px;top:684px;width:1526px;height:28px;background:#e2ecd9;"></div>
<div class="r" style="left:179px;top:712px;width:1526px;height:2px;background:#ffffff;"></div>
<div class="r" style="left:179px;top:714px;width:1526px;height:28px;background:#ccdeb9;"></div>
<div class="r" style="left:179px;top:742px;width:1526px;height:2px;background:#ffffff;"></div>
<div class="r" style="left:179px;top:744px;width:1526px;height:28px;background:#e2ecd9;"></div>
<div class="r" style="left:179px;top:772px;width:1526px;height:2px;background:#ffffff;"></div>
<div class="r" style="left:179px;top:774px;width:1526px;height:28px;background:#ccdeb9;"></div>
<div class="r" style="left:179px;top:802px;width:1526px;height:2px;background:#ffffff;"></div>
<div class="r" style="left:179px;top:804px;width:1526px;height:28px;background:#e2ecd9;"></div>
<div class="r" style="left:179px;top:832px;width:1526px;height:2px;background:#ffffff;"></div>
<div class="r" style="left:179px;top:834px;width:1526px;height:28px;background:#ccdeb9;"></div>
<div class="r" style="left:179px;top:862px;width:1526px;height:2px;background:#ffffff;"></div>
<div class="r" style="left:179px;top:864px;width:1526px;height:28px;background:#e2ecd9;"></div>
<div class="r" style="left:179px;top:892px;width:1526px;height:2px;background:#ffffff;"></div>
<div class="r" style="left:179px;top:894px;width:1526px;height:28px;background:#ccdeb9;"></div>
<div class="r" style="left:179px;top:922px;width:1526px;height:2px;background:#ffffff;"></div>
<div class="r" style="left:179px;top:924px;width:1526px;height:28px;background:#e2ecd9;"></div>
<div class="r" style="left:179px;top:952px;width:1526px;height:2px;background:#ffffff;"></div>
<div class="r" style="left:179px;top:954px;width:1526px;height:28px;background:#ccdeb9;"></div>
<div class="r" style="left:179px;top:982px;width:1526px;height:2px;background:#ffffff;"></div>
<div class="r" style="left:179px;top:984px;width:1526px;height:28px;background:#e2ecd9;"></div>
<div class="r" style="left:179px;top:1012px;width:1526px;height:2px;background:#ffffff;"></div>
<div class="r" style="left:179px;top:1014px;width:1526px;height:28px;background:#ccdeb9;"></div>
<div class="r" style="left:179px;top:1042px;width:1526px;height:2px;background:#ffffff;"></div>
<div class="r" style="left:179px;top:1044px;width:1526px;height:28px;background:#e2ecd9;"></div>
<div class="r" style="left:179px;top:1072px;width:1526px;height:2px;background:#ffffff;"></div>
<div class="r" style="left:179px;top:1074px;width:1526px;height:28px;background:#ccdeb9;"></div>
<div class="r" style="left:179px;top:1102px;width:1526px;height:2px;background:#ffffff;"></div>
<div class="r" style="left:179px;top:1104px;width:1526px;height:28px;background:#e2ecd9;"></div>
<div class="r" style="left:179px;top:1132px;width:1526px;height:2px;background:#ffffff;"></div>
<div class="r" style="left:179px;top:1134px;width:1526px;height:28px;background:#ccdeb9;"></div>
<div class="r" style="left:179px;top:1162px;width:1526px;height:2px;background:#ffffff;"></div>
<div class="r" style="left:179px;top:1164px;width:1526px;height:28px;background:#e2ecd9;"></div>
<div class="r" style="left:179px;top:1192px;width:1526px;height:2px;background:#ffffff;"></div>
<div class="r" style="left:179px;top:1194px;width:1526px;height:28px;background:#ccdeb9;"></div>
<div class="r" style="left:179px;top:1222px;width:1526px;height:2px;background:#ffffff;"></div>
<div class="r" style="left:179px;top:1224px;width:1526px;height:28px;background:#e2ecd9;"></div>
<div class="r" style="left:179px;top:1252px;width:1526px;height:2px;background:#ffffff;"></div>
<div class="r" style="left:179px;top:1254px;width:1526px;height:28px;background:#ccdeb9;"></div>
<div class="r" style="left:179px;top:1282px;width:1526px;height:2px;background:#ffffff;"></div>
<div class="r" style="left:179px;top:1284px;width:1526px;height:28px;background:#e2ecd9;"></div>
<div class="r" style="left:179px;top:1312px;width:1526px;height:2px;background:#ffffff;"></div>
<div class="r" style="left:179px;top:1314px;width:1526px;height:28px;background:#ccdeb9;"></div>
<div class="r" style="left:179px;top:1342px;width:1526px;height:2px;background:#ffffff;"></div>
<div class="r" style="left:179px;top:1344px;width:1526px;height:28px;background:#e2ecd9;"></div>
<div class="r" style="left:179px;top:1372px;width:1526px;height:2px;background:#ffffff;"></div>
<div class="r" style="left:567px;top:442px;width:2px;height:940px;background:#ffffff;"></div>
<div class="r" style="left:827px;top:442px;width:2px;height:940px;background:#ffffff;"></div>
<div class="r" style="left:1089px;top:442px;width:2px;height:940px;background:#ffffff;"></div>
<div class="r" style="left:1409px;top:442px;width:2px;height:940px;background:#ffffff;"></div>
<div class="t" style="left:184.51px;top:458.45px;font-size:20.93px;color:#ffffff;font-weight:bold;transform:scaleX(0.9497);">Nombre</div>
<div class="r" style="left:537px;top:442px;width:26px;height:26px;border:2px solid #4a6b39;border-radius:3px;background:linear-gradient(#ffffff,#f2f2f2);box-shadow:0 1.5px 0 #a0a0a0;"></div>
<svg style="left:544px;top:453px" width="16" height="11"><polygon points="0.5,0.5 15.5,0.5 8,10" fill="#7f7f7f" stroke="#7f7f7f" stroke-linejoin="round"/></svg>
<div class="t" style="left:572.75px;top:458.45px;font-size:20.93px;color:#ffffff;font-weight:bold;transform:scaleX(0.9043);">Servicio</div>
<div class="r" style="left:797px;top:442px;width:26px;height:26px;border:2px solid #4a6b39;border-radius:3px;background:linear-gradient(#ffffff,#f2f2f2);box-shadow:0 1.5px 0 #a0a0a0;"></div>
<svg style="left:804px;top:453px" width="16" height="11"><polygon points="0.5,0.5 15.5,0.5 8,10" fill="#7f7f7f" stroke="#7f7f7f" stroke-linejoin="round"/></svg>
<div class="t" style="left:832.27px;top:458.45px;font-size:20.93px;color:#ffffff;font-weight:bold;transform:scaleX(0.9068);">Localidad</div>
<div class="r" style="left:1059px;top:442px;width:26px;height:26px;border:2px solid #4a6b39;border-radius:3px;background:linear-gradient(#ffffff,#f2f2f2);box-shadow:0 1.5px 0 #a0a0a0;"></div>
<svg style="left:1066px;top:453px" width="16" height="11"><polygon points="0.5,0.5 15.5,0.5 8,10" fill="#7f7f7f" stroke="#7f7f7f" stroke-linejoin="round"/></svg>
<div class="t" style="left:1094.08px;top:458.45px;font-size:20.93px;color:#ffffff;font-weight:bold;transform:scaleX(0.8971);">Fecha</div>
<div class="r" style="left:1379px;top:442px;width:26px;height:26px;border:2px solid #4a6b39;border-radius:3px;background:linear-gradient(#ffffff,#f2f2f2);box-shadow:0 1.5px 0 #a0a0a0;"></div>
<svg style="left:1386px;top:453px" width="16" height="11"><polygon points="0.5,0.5 15.5,0.5 8,10" fill="#7f7f7f" stroke="#7f7f7f" stroke-linejoin="round"/></svg>
<div class="t" style="left:1414.33px;top:458.45px;font-size:20.93px;color:#ffffff;font-weight:bold;transform:scaleX(0.9357);">Importe Factura</div>
<div class="r" style="left:1673px;top:442px;width:26px;height:26px;border:2px solid #4a6b39;border-radius:3px;background:linear-gradient(#ffffff,#f2f2f2);box-shadow:0 1.5px 0 #a0a0a0;"></div>
<svg style="left:1680px;top:453px" width="16" height="11"><polygon points="0.5,0.5 15.5,0.5 8,10" fill="#7f7f7f" stroke="#7f7f7f" stroke-linejoin="round"/></svg>
<div class="t" style="left:184.66px;top:489.12px;font-size:19.00px;color:#000000;transform:scaleX(1.0368);-webkit-text-stroke:0.20px #000000;">Gregorio Luis Miguel Escobedo Benítez</div>
<div class="t" style="left:572.88px;top:489.12px;font-size:19.00px;color:#000000;transform:scaleX(1.0769);-webkit-text-stroke:0.20px #000000;">Movil + Fijo</div>
<div class="t" style="left:184.67px;top:519.12px;font-size:19.00px;color:#000000;transform:scaleX(1.0324);-webkit-text-stroke:0.20px #000000;">Camilo Santana</div>
<div class="t" style="left:184.65px;top:549.12px;font-size:19.00px;color:#000000;transform:scaleX(1.0294);-webkit-text-stroke:0.20px #000000;">Irene Laboy Castellanos</div>
<div class="t" style="left:184.66px;top:579.12px;font-size:19.00px;color:#000000;transform:scaleX(1.0394);-webkit-text-stroke:0.20px #000000;">Cristobal Estefanía Robledo</div>
<div class="t" style="left:184.63px;top:609.12px;font-size:19.00px;color:#000000;transform:scaleX(1.0655);-webkit-text-stroke:0.20px #000000;">Cornelio Martín Esquivel Navarro</div>
<div class="t" style="left:184.68px;top:639.12px;font-size:19.00px;color:#000000;transform:scaleX(1.0133);-webkit-text-stroke:0.20px #000000;">Dr. Sergio Ruelas</div>
<div class="t" style="left:184.72px;top:669.12px;font-size:19.00px;color:#000000;transform:scaleX(0.9897);-webkit-text-stroke:0.20px #000000;">Estela Rosalia Magaña</div>
<div class="t" style="left:572.88px;top:669.12px;font-size:19.00px;color:#000000;transform:scaleX(1.0769);-webkit-text-stroke:0.20px #000000;">Movil + Fijo</div>
<div class="t" style="left:184.70px;top:699.12px;font-size:19.00px;color:#000000;transform:scaleX(1.0452);-webkit-text-stroke:0.20px #000000;">Alicia Adán Rodríguez</div>
<div class="t" style="left:573.00px;top:699.12px;font-size:19.00px;color:#000000;transform:scaleX(0.9143);-webkit-text-stroke:0.20px #000000;">ADSL</div>
<div class="t" style="left:184.70px;top:729.12px;font-size:19.00px;color:#000000;transform:scaleX(1.0131);-webkit-text-stroke:0.20px #000000;">Jaime Acuña Ríos</div>
<div class="t" style="left:573.00px;top:729.12px;font-size:19.00px;color:#000000;transform:scaleX(0.9143);-webkit-text-stroke:0.20px #000000;">ADSL</div>
<div class="t" style="left:184.70px;top:759.12px;font-size:19.00px;color:#000000;transform:scaleX(1.0503);-webkit-text-stroke:0.20px #000000;">Abigail Teresa de la Fuente Portillo</div>
<div class="t" style="left:572.75px;top:759.12px;font-size:19.00px;color:#000000;transform:scaleX(1.1687);-webkit-text-stroke:0.20px #000000;">Movil</div>
<div class="t" style="left:184.67px;top:789.12px;font-size:19.00px;color:#000000;transform:scaleX(1.1099);-webkit-text-stroke:0.20px #000000;">Jerónimo Brito</div>
<div class="t" style="left:572.88px;top:789.12px;font-size:19.00px;color:#000000;transform:scaleX(1.0769);-webkit-text-stroke:0.20px #000000;">Movil + Fijo</div>
<div class="t" style="left:184.70px;top:819.12px;font-size:19.00px;color:#000000;transform:scaleX(1.0354);-webkit-text-stroke:0.20px #000000;">Abraham Arreola Lozada</div>
<div class="t" style="left:572.93px;top:819.12px;font-size:19.00px;color:#000000;transform:scaleX(1.0944);-webkit-text-stroke:0.20px #000000;">Otros</div>
<div class="t" style="left:184.65px;top:849.12px;font-size:19.00px;color:#000000;transform:scaleX(1.0322);-webkit-text-stroke:0.20px #000000;">Lucas Paulina Almaraz</div>
<div class="t" style="left:573.00px;top:849.12px;font-size:19.00px;color:#000000;transform:scaleX(0.9143);-webkit-text-stroke:0.20px #000000;">ADSL</div>
<div class="t" style="left:184.73px;top:879.12px;font-size:19.00px;color:#000000;transform:scaleX(0.9801);-webkit-text-stroke:0.20px #000000;">Elena Teresa Zapata</div>
<div class="t" style="left:572.93px;top:879.12px;font-size:19.00px;color:#000000;transform:scaleX(1.0944);-webkit-text-stroke:0.20px #000000;">Otros</div>
<div class="t" style="left:184.66px;top:909.12px;font-size:19.00px;color:#000000;transform:scaleX(1.0415);-webkit-text-stroke:0.20px #000000;">César Caridad Tello Jaramillo</div>
<div class="t" style="left:572.93px;top:909.12px;font-size:19.00px;color:#000000;transform:scaleX(1.0944);-webkit-text-stroke:0.20px #000000;">Otros</div>
<div class="t" style="left:184.67px;top:939.12px;font-size:19.00px;color:#000000;transform:scaleX(1.0201);-webkit-text-stroke:0.20px #000000;">Pascual Ponce</div>
<div class="t" style="left:573.00px;top:939.12px;font-size:19.00px;color:#000000;transform:scaleX(0.9143);-webkit-text-stroke:0.20px #000000;">ADSL</div>
<div class="t" style="left:184.61px;top:969.12px;font-size:19.00px;color:#000000;transform:scaleX(1.0605);-webkit-text-stroke:0.20px #000000;">Lorenzo Cedillo</div>
<div class="t" style="left:572.75px;top:969.12px;font-size:19.00px;color:#000000;transform:scaleX(1.1687);-webkit-text-stroke:0.20px #000000;">Movil</div>
<div class="t" style="left:184.58px;top:999.12px;font-size:19.00px;color:#000000;transform:scaleX(1.0814);-webkit-text-stroke:0.20px #000000;">Mtro. Agustín Véliz</div>
<div class="t" style="left:572.75px;top:999.12px;font-size:19.00px;color:#000000;transform:scaleX(1.1687);-webkit-text-stroke:0.20px #000000;">Movil</div>
<div class="t" style="left:184.66px;top:1029.12px;font-size:19.00px;color:#000000;transform:scaleX(1.0254);-webkit-text-stroke:0.20px #000000;">Ing. Ignacio Estrada</div>
<div class="t" style="left:572.75px;top:1029.12px;font-size:19.00px;color:#000000;transform:scaleX(1.1687);-webkit-text-stroke:0.20px #000000;">Movil</div>
<div class="t" style="left:184.65px;top:1059.12px;font-size:19.00px;color:#000000;transform:scaleX(1.0318);-webkit-text-stroke:0.20px #000000;">Rocío Elvira Valles</div>
<div class="t" style="left:573.00px;top:1059.12px;font-size:19.00px;color:#000000;transform:scaleX(0.9143);-webkit-text-stroke:0.20px #000000;">ADSL</div>
<div class="t" style="left:184.70px;top:1089.12px;font-size:19.00px;color:#000000;transform:scaleX(1.0845);-webkit-text-stroke:0.20px #000000;">Abigail Modesto Saldivar Trujillo</div>
<div class="t" style="left:573.00px;top:1089.12px;font-size:19.00px;color:#000000;transform:scaleX(0.9143);-webkit-text-stroke:0.20px #000000;">ADSL</div>
<div class="t" style="left:184.65px;top:1119.12px;font-size:19.00px;color:#000000;transform:scaleX(1.0701);-webkit-text-stroke:0.20px #000000;">Omar Limón</div>
<div class="t" style="left:572.75px;top:1119.12px;font-size:19.00px;color:#000000;transform:scaleX(1.1687);-webkit-text-stroke:0.20px #000000;">Movil</div>
<div class="t" style="left:184.58px;top:1149.12px;font-size:19.00px;color:#000000;transform:scaleX(1.0698);-webkit-text-stroke:0.20px #000000;">Ing. Clara Montero</div>
<div class="t" style="left:572.93px;top:1149.12px;font-size:19.00px;color:#000000;transform:scaleX(1.0944);-webkit-text-stroke:0.20px #000000;">Otros</div>
<div class="t" style="left:184.64px;top:1179.12px;font-size:19.00px;color:#000000;transform:scaleX(1.0423);-webkit-text-stroke:0.20px #000000;">Mtro. Luz Escalante</div>
<div class="t" style="left:573.00px;top:1179.12px;font-size:19.00px;color:#000000;transform:scaleX(0.9143);-webkit-text-stroke:0.20px #000000;">ADSL</div>
<div class="t" style="left:184.63px;top:1209.12px;font-size:19.00px;color:#000000;transform:scaleX(1.0397);-webkit-text-stroke:0.20px #000000;">Ing. Modesto Jáquez</div>
<div class="t" style="left:572.93px;top:1209.12px;font-size:19.00px;color:#000000;transform:scaleX(1.0944);-webkit-text-stroke:0.20px #000000;">Otros</div>
<div class="t" style="left:184.70px;top:1239.12px;font-size:19.00px;color:#000000;transform:scaleX(1.0782);-webkit-text-stroke:0.20px #000000;">Wendolin Marisela Sotelo</div>
<div class="t" style="left:573.00px;top:1239.12px;font-size:19.00px;color:#000000;transform:scaleX(0.9143);-webkit-text-stroke:0.20px #000000;">ADSL</div>
<div class="t" style="left:184.61px;top:1269.12px;font-size:19.00px;color:#000000;transform:scaleX(1.0622);-webkit-text-stroke:0.20px #000000;">Mariano Guadalupe Mojica Pineda</div>
<div class="t" style="left:572.75px;top:1269.12px;font-size:19.00px;color:#000000;transform:scaleX(1.1687);-webkit-text-stroke:0.20px #000000;">Movil</div>
<div class="t" style="left:184.59px;top:1299.12px;font-size:19.00px;color:#000000;transform:scaleX(1.0712);-webkit-text-stroke:0.20px #000000;">Bernardo Villaseñor Ontiveros</div>
<div class="t" style="left:572.75px;top:1299.12px;font-size:19.00px;color:#000000;transform:scaleX(1.1687);-webkit-text-stroke:0.20px #000000;">Movil</div>
<div class="t" style="left:184.70px;top:1329.12px;font-size:19.00px;color:#000000;transform:scaleX(1.0413);-webkit-text-stroke:0.20px #000000;">Amelia Collazo</div>
<div class="t" style="left:572.88px;top:1329.12px;font-size:19.00px;color:#000000;transform:scaleX(1.0769);-webkit-text-stroke:0.20px #000000;">Movil + Fijo</div>
<div class="t" style="left:184.66px;top:1359.12px;font-size:19.00px;color:#000000;transform:scaleX(1.0294);-webkit-text-stroke:0.20px #000000;">Úrsula Hernádez Gil</div>
<div class="t" style="left:572.93px;top:1359.12px;font-size:19.00px;color:#000000;transform:scaleX(1.0944);-webkit-text-stroke:0.20px #000000;">Otros</div>
<svg style="left:0;top:0" width="1712" height="340"><polygon points="157.8,302 164.9,290.2 172,302" fill="#c8c8c8" stroke="#c8c8c8" stroke-width="1" stroke-linejoin="round"/><polygon points="157.8,313.8 172,313.8 164.9,325.6" fill="#c8c8c8" stroke="#c8c8c8" stroke-width="1" stroke-linejoin="round"/><path d="M207.3 302.5 L224.3 319.3 M224.3 302.5 L207.3 319.3" stroke="#575757" stroke-width="4"/><path d="M262.2 310.8 L271.2 319.3 L287.3 302.4" stroke="#575757" stroke-width="4.4" fill="none"/></svg>
<svg style="left:0;top:0" width="1712" height="340" fill="none" stroke="#9a9a9a" stroke-linecap="round"><path d="M339.6 296.6 C338 294.3 334.6 294.6 333.2 298.6 L328.6 318.2 C327.6 322.4 324.4 324 322.2 322.4" stroke-width="2.3"/><path d="M326.6 304 H336.8" stroke-width="2"/><path d="M337 310 C339.6 308.6 341.2 310 342.2 313 L344 317.6 C345 320.2 347.4 320.6 349.2 318.6" stroke-width="2.3"/><path d="M348.4 310 C346 309.6 344.6 311 342.6 313.6 L339.6 317.2 C338.6 318.6 337.6 319.4 336.6 319" stroke-width="1.7"/><circle cx="339.2" cy="297.8" r="1.9" fill="#9a9a9a" stroke="none"/><circle cx="322.3" cy="322" r="1.9" fill="#9a9a9a" stroke="none"/><circle cx="348.3" cy="309.7" r="1.8" fill="#9a9a9a" stroke="none"/><circle cx="336.5" cy="318.7" r="1.8" fill="#9a9a9a" stroke="none"/></svg>
<div class="r" style="left:565px;top:470px;width:266px;height:4px;background:#33704a;"></div>
<div class="r" style="left:565px;top:470px;width:4px;height:36px;background:#33704a;"></div>
<div class="r" style="left:565px;top:502px;width:256px;height:4px;background:#33704a;"></div>
<div class="r" style="left:569px;top:474px;width:258px;height:2px;background:#ffffff;"></div>
<div class="r" style="left:569px;top:474px;width:2px;height:28px;background:#ffffff;"></div>
<div class="r" style="left:569px;top:500px;width:256px;height:2px;background:#ffffff;"></div>
<div class="r" style="left:825px;top:474px;width:2px;height:28px;background:#ffffff;"></div>
<div class="r" style="left:821px;top:496px;width:12px;height:12px;background:#ffffff;"></div>
<div class="r" style="left:823px;top:498px;width:10px;height:10px;background:#33704a;"></div>
<div class="r" style="left:827px;top:472px;width:26px;height:26px;border-radius:0 4px 4px 0;background:linear-gradient(#ffffff,#f1f1f1);border:2px solid #8f8f8f;border-left-color:#1d3d24;border-right-color:#7d8a74;border-bottom-color:#7d8a74;"></div>
<svg style="left:834px;top:483px" width="16" height="10"><polygon points="0.8,0.6 15.2,0.6 8,9.6" fill="#808080" stroke="#808080" stroke-width="1" stroke-linejoin="round"/></svg>
<div class="r" style="left:568px;top:505.5px;width:176px;height:153px;background:#1f2022;border:2px solid #3b3b3b;box-shadow:5px 9px 22px rgba(0,0,0,0.32);"></div>
<div class="r" style="left:571px;top:508px;width:174px;height:37.6px;background:#2a6130;"></div>
<div class="t" style="left:574.08px;top:526.14px;font-size:25.87px;color:#b9b9b9;transform:scaleX(1.0583);">Movil + Fijo</div>
<div class="t" style="left:576.20px;top:564.63px;font-size:27.03px;color:#e4e4e4;transform:scaleX(0.9333);">ADSL</div>
<div class="t" style="left:574.11px;top:602.33px;font-size:26.45px;color:#e4e4e4;transform:scaleX(1.0438);">Movil</div>
<div class="t" style="left:574.94px;top:640.33px;font-size:27.33px;color:#e4e4e4;transform:scaleX(1.0093);">Otros</div>
<div class="r" style="left:1695.5px;top:1364px;width:7.5px;height:7.5px;background:#3a50a8;clip-path:polygon(60% 0,100% 0,100% 100%,0 100%,0 50%,60% 50%);"></div>
</body></html>
